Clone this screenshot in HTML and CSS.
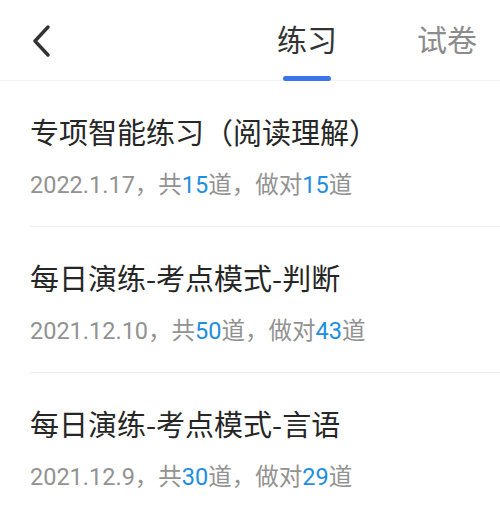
FILE: index.html
```html
<!DOCTYPE html>
<html lang="zh-CN">
<head>
    <meta charset="UTF-8">
    <meta name="viewport" content="width=device-width, initial-scale=1.0">
    <title>练习记录</title>
    <link rel="stylesheet" href="styles.css">
</head>
<body>
<header class="topbar">
    <a class="back" href="#">
        <svg width="18" height="32" viewBox="0 0 18 32">
            <path d="M16 2 L3 16 L16 30" fill="none" stroke="#333" stroke-width="3.4" stroke-linecap="round" stroke-linejoin="round"/>
        </svg>
    </a>
    <nav class="tabs">
        <div class="tab active">练习<span class="bar"></span></div>
        <div class="tab">试卷</div>
    </nav>
</header>

<!-- Practice list -->
<ul class="list">
    <li class="item">
        <div class="title">专项智能练习（阅读理解）</div>
        <div class="meta">2022.1.17，共<span class="num">15</span>道，做对<span class="num">15</span>道</div>
    </li>
    <li class="item">
        <div class="title">每日演练-考点模式-判断</div>
        <div class="meta">2021.12.10，共<span class="num">50</span>道，做对<span class="num">43</span>道</div>
    </li>
    <li class="item">
        <div class="title">每日演练-考点模式-言语</div>
        <div class="meta">2021.12.9，共<span class="num">30</span>道，做对<span class="num">29</span>道</div>
    </li>
</ul>
</body>
</html>
```

FILE: styles.css
```css
body {
    margin: 0;
    font-family: Roboto, "Noto Sans CJK SC", sans-serif;
    background: #fff;
    color: #222;
}

.topbar {
    display: flex;
    align-items: flex-start;
    height: 80px;
    border-bottom: 1px solid #f2f2f2;
}

.back {
    display: block;
    margin: 25px 0 0 32px;
    width: 18px;
    height: 32px;
}

.back svg {
    display: block;
}

.tabs {
    display: flex;
    gap: 80px;
    margin-left: auto;
    padding-right: 23px;
}

.tab {
    display: flex;
    flex-direction: column;
    align-items: center;
    padding-top: 26px;
    font-size: 30px;
    line-height: 30px;
    color: #8c8c8c;
}

.tab.active {
    color: #333;
}

.tab .bar {
    display: block;
    width: 48px;
    height: 5px;
    margin-top: 20px;
    border-radius: 3px;
    background: #3a76e8;
}

.list {
    list-style: none;
    margin: 0;
    padding: 0;
}

.item {
    margin-left: 30px;
    padding: 32px 0 26px;
    border-bottom: 1px solid #f0f0f0;
}

.item:last-child {
    border-bottom: none;
}

.title {
    font-family: "Noto Sans CJK SC", sans-serif;
    font-size: 29px;
    line-height: 36px;
    color: #262626;
}

.meta {
    margin-top: 21px;
    font-size: 23.5px;
    line-height: 30px;
    color: #929292;
}

.num {
    color: #1e8ee0;
}
```
